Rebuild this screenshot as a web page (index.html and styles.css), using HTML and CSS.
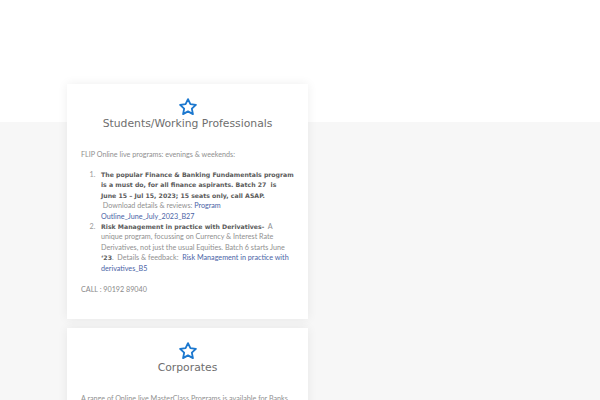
FILE: index.html
```html
<!DOCTYPE html>
<html>
<head>
<meta charset="utf-8">
<link rel="stylesheet" href="styles.css">
</head>
<body>
<div class="page">
  <div class="column">
    <div class="card">
      <div class="icon">
        <svg viewBox="0 0 24 24" width="20" height="20"><polygon points="12 2.5 14.9 8.6 21.5 9.4 16.6 13.9 17.9 20.5 12 17.2 6.1 20.5 7.4 13.9 2.5 9.4 9.1 8.6" fill="none" stroke="#1c78cf" stroke-width="2.2" stroke-linejoin="round"/></svg>
      </div>
      <h2 class="title">Students/Working Professionals</h2>
      <p class="intro">FLIP Online live programs: evenings &amp; weekends:</p>
      <ol class="list">
        <li><b>The popular Finance &amp; Banking Fundamentals program<br>is a must do, for all finance aspirants. Batch 27&nbsp; is<br>June 15 – Jul 15, 2023; 15 seats only, call ASAP.</b><br><span class="reg">&nbsp;Download details &amp; reviews: </span><a class="link">Program<br>Outline_June_July_2023_B27</a></li>
        <li><b>Risk Management in practice with Derivatives-</b><span class="reg">&nbsp; A<br>unique program, focussing on Currency &amp; Interest Rate<br>Derivatives, not just the usual Equities. Batch 6 starts June<br></span><b>‘23</b><span class="reg">.&nbsp; Details &amp; feedback:&nbsp; </span><a class="link">Risk Management in practice with<br>derivatives_B5</a></li>
      </ol>
      <p class="call">CALL : 90192 89040</p>
    </div>
    <div class="card">
      <div class="icon">
        <svg viewBox="0 0 24 24" width="20" height="20"><polygon points="12 2.5 14.9 8.6 21.5 9.4 16.6 13.9 17.9 20.5 12 17.2 6.1 20.5 7.4 13.9 2.5 9.4 9.1 8.6" fill="none" stroke="#1c78cf" stroke-width="2.2" stroke-linejoin="round"/></svg>
      </div>
      <h2 class="title">Corporates</h2>
      <p class="intro">A range of Online live MasterClass Programs is available for Banks, Corporates and Financial Institutions.</p>
    </div>
  </div>
</div>
</body>
</html>
```
FILE: styles.css
```css
html, body {
  margin: 0;
  padding: 0;
}
body {
  background: #f7f7f7;
  font-family: "DejaVu Sans", Verdana, sans-serif;
}
.page {
  min-height: 400px;
  background: linear-gradient(#ffffff 0, #ffffff 122px, #f7f7f7 122px);
  padding-top: 84px;
  box-sizing: border-box;
}
.column {
  width: 241px;
  margin-left: 67px;
  display: flex;
  flex-direction: column;
  gap: 9px;
}
.card {
  background: #ffffff;
  box-shadow: 0 0 10px rgba(0, 0, 0, 0.07);
  padding: 13px 14px 24px;
}
.icon {
  display: flex;
  justify-content: center;
  height: 20px;
}
.icon svg {
  display: block;
}
.title {
  margin: 0;
  text-align: center;
  font-family: "DejaVu Sans", Verdana, sans-serif;
  font-weight: normal;
  font-size: 10.8px;
  line-height: 13px;
  color: #6e6e6e;
}
.intro {
  margin: 19px 0 0;
  font-family: Lato, "Open Sans", sans-serif;
  font-size: 7.2px;
  line-height: 11px;
  color: #909090;
}
.list {
  margin: 10px 0 0;
  padding-left: 20px;
  font-family: Lato, "Open Sans", sans-serif;
  font-size: 7.2px;
  line-height: 10.4px;
  color: #909090;
}
.list li {
  line-height: 10.4px;
  white-space: nowrap;
}
.list li::marker {
  content: counter(list-item) ".\00a0\00a0\00a0";
  font-family: Lato, sans-serif;
  font-size: 7.2px;
  color: #999;
}
.list b {
  font-family: "DejaVu Sans", Verdana, sans-serif;
  font-size: 6.2px;
  font-weight: bold;
  color: #5a5a5a;
}
.reg {
  color: #909090;
}
.link {
  color: #4a64a6;
  text-decoration: none;
}
.call {
  margin: 9.6px 0 0;
  font-family: Lato, "Open Sans", sans-serif;
  font-size: 7.2px;
  line-height: 11px;
  color: #8a8a8a;
}
```
